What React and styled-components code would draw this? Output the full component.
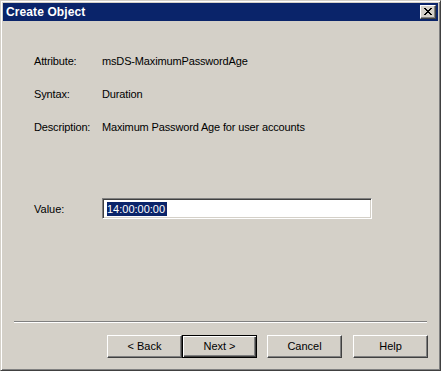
import React from 'react';
import styled, { createGlobalStyle } from 'styled-components';

const GlobalStyle = createGlobalStyle`
    html, body {
        margin: 0;
        padding: 0;
        background: #d4d0c8;
    }
    * {
        box-sizing: border-box;
    }
`

const Window = styled.div`
    width: 441px;
    height: 371px;
    display: flex;
    flex-direction: column;
    background: #d4d0c8;
    border-top: 1px solid #d4d0c8;
    border-left: 1px solid #d4d0c8;
    border-right: 1px solid #404040;
    border-bottom: 1px solid #404040;
    box-shadow: inset 1px 1px 0 #ffffff, inset -1px -1px 0 #808080;
    padding: 2px;
    font-family: "Liberation Sans", Arial, sans-serif;
    font-size: 11px;
    color: #000;
`
const TitleBar = styled.div`
    height: 18px;
    background: #0a246a;
    display: flex;
    align-items: center;
    justify-content: space-between;
    padding: 0 2px 0 2px;
`
const TitleText = styled.span`
    color: #fff;
    font-weight: bold;
    font-size: 12px;
    letter-spacing: 0.1px;
    padding-left: 1px;
`
const CloseButton = styled.div`
    width: 16px;
    height: 14px;
    background: #d4d0c8;
    border-top: 1px solid #fff;
    border-left: 1px solid #fff;
    border-right: 1px solid #404040;
    border-bottom: 1px solid #404040;
    box-shadow: inset -1px -1px 0 #808080;
    display: flex;
    align-items: center;
    justify-content: center;
    padding-right: 1px;
    padding-bottom: 1px;
`
const Body = styled.div`
    flex: 1;
    display: flex;
    flex-direction: column;
    padding: 34px 0 10px 0;
`
const Fields = styled.div`
    display: grid;
    grid-template-columns: 68px 1fr;
    row-gap: 20px;
    padding-left: 31px;
    line-height: 13px;
    letter-spacing: -0.15px;
`
const Label = styled.div`
    white-space: nowrap;
`
const Value = styled.div`
    white-space: nowrap;
`
const ValueRow = styled.div`
    display: grid;
    grid-template-columns: 68px 270px;
    align-items: center;
    padding-left: 31px;
    margin-top: 64px;
`
const TextBox = styled.div`
    height: 21px;
    background: #fff;
    border-top: 1px solid #808080;
    border-left: 1px solid #808080;
    border-right: 1px solid #fff;
    border-bottom: 1px solid #fff;
    box-shadow: inset 1px 1px 0 #404040, inset -1px -1px 0 #d4d0c8;
    display: flex;
    align-items: center;
    padding-left: 4px;
`
const Selected = styled.span`
    background: #0a246a;
    color: #fff;
    line-height: 14px;
    padding: 0 2px 0 0;
`
const Separator = styled.div`
    margin: auto 11px 0 11px;
    height: 2px;
    border-top: 1px solid #808080;
    border-bottom: 1px solid #fff;
`
const ButtonRow = styled.div`
    display: flex;
    justify-content: flex-end;
    padding: 12px 10px 0 0;
`
const Button = styled.div`
    width: 75px;
    height: 23px;
    margin-left: ${props => props.gap || 0}px;
    background: #d4d0c8;
    display: flex;
    align-items: center;
    justify-content: center;
    font-size: 11px;
    border: 1px solid ${props => props.primary ? '#000' : 'transparent'};
    border-top-color: ${props => props.primary ? '#000' : '#fff'};
    border-left-color: ${props => props.primary ? '#000' : '#fff'};
    border-right-color: ${props => props.primary ? '#000' : '#404040'};
    border-bottom-color: ${props => props.primary ? '#000' : '#404040'};
    box-shadow: ${props => props.primary
        ? 'inset 1px 1px 0 #fff, inset -1px -1px 0 #404040, inset -2px -2px 0 #808080'
        : 'inset -1px -1px 0 #808080'};
    padding-bottom: 1px;
`

function CloseIcon() {
    return (
        <svg width="8" height="7" viewBox="0 0 8 7" shapeRendering="crispEdges">
            <path d="M0 0h2v1h-2zM6 0h2v1h-2zM1 1h2v1h-2zM5 1h2v1h-2zM2 2h4v1h-4zM3 3h2v1h-2zM2 4h4v1h-4zM1 5h2v1h-2zM5 5h2v1h-2zM0 6h2v1h-2zM6 6h2v1h-2z" fill="#000" />
        </svg>
    )
}

function App() {
    const rows = [
        ['Attribute:', 'msDS-MaximumPasswordAge'],
        ['Syntax:', 'Duration'],
        ['Description:', 'Maximum Password Age for user accounts'],
    ]

    return (
        <Window>
            <GlobalStyle />
            <TitleBar>
                <TitleText>Create Object</TitleText>
                <CloseButton><CloseIcon /></CloseButton>
            </TitleBar>
            <Body>
                <Fields>
                    {rows.map(([label, value]) => (
                        <React.Fragment key={label}>
                            <Label>{label}</Label>
                            <Value>{value}</Value>
                        </React.Fragment>
                    ))}
                </Fields>
                <ValueRow>
                    <Label>Value:</Label>
                    <TextBox><Selected>14:00:00:00</Selected></TextBox>
                </ValueRow>
                <Separator />
                <ButtonRow>
                    <Button>&lt; Back</Button>
                    <Button primary>Next &gt;</Button>
                    <Button gap={10}>Cancel</Button>
                    <Button gap={11}>Help</Button>
                </ButtonRow>
            </Body>
        </Window>
    )
}
export default App;
